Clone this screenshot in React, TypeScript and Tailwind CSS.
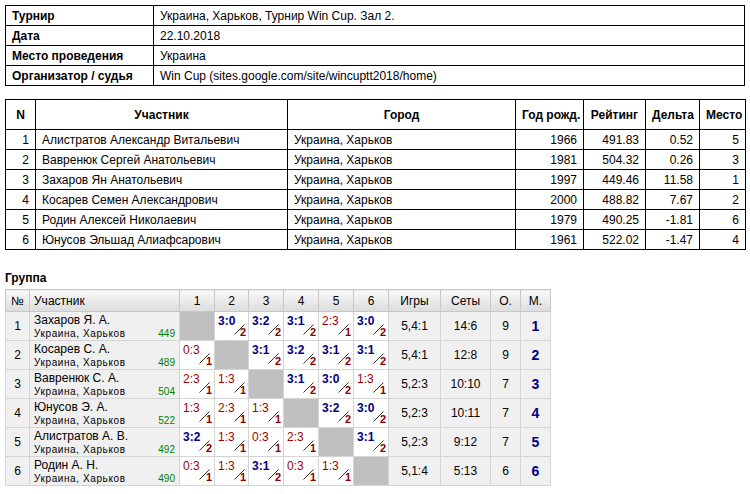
const info = [
  ["Турнир", "Украина, Харьков, Турнир Win Cup. Зал 2."],
  ["Дата", "22.10.2018"],
  ["Место проведения", "Украина"],
  ["Организатор / судья", "Win Cup (sites.google.com/site/wincuptt2018/home)"],
];
const players = [
  ["1", "Алистратов Александр Витальевич", "1966", "491.83", "0.52", "5"],
  ["2", "Вавренюк Сергей Анатольевич", "1981", "504.32", "0.26", "3"],
  ["3", "Захаров Ян Анатольевич", "1997", "449.46", "11.58", "1"],
  ["4", "Косарев Семен Александрович", "2000", "488.82", "7.67", "2"],
  ["5", "Родин Алексей Николаевич", "1979", "490.25", "-1.81", "6"],
  ["6", "Юнусов Эльшад Алиафсарович", "1961", "522.02", "-1.47", "4"],
];
const group = [
  ["Захаров Я. А.", "449", ["", "3:0", "3:2", "3:1", "2:3", "3:0"], "5,4:1", "14:6", "9", "1"],
  ["Косарев С. А.", "489", ["0:3", "", "3:1", "3:2", "3:1", "3:1"], "5,4:1", "12:8", "9", "2"],
  ["Вавренюк С. А.", "504", ["2:3", "1:3", "", "3:1", "3:0", "1:3"], "5,2:3", "10:10", "7", "3"],
  ["Юнусов Э. А.", "522", ["1:3", "2:3", "1:3", "", "3:2", "3:0"], "5,2:3", "10:11", "7", "4"],
  ["Алистратов А. В.", "492", ["3:2", "1:3", "0:3", "2:3", "", "3:1"], "5,2:3", "9:12", "7", "5"],
  ["Родин А. Н.", "490", ["0:3", "1:3", "3:1", "0:3", "1:3", ""], "5,1:4", "5:13", "6", "6"],
] as const;

function Score({ s }: { s: string }) {
  if (!s) return <td className="border border-[#d4d4d4] bg-[#c0c0c0] p-0" />;
  const win = s[0] === "3";
  return (
    <td className="border border-[#d4d4d4] bg-white p-0">
      <div className="relative h-[28px]">
        <span className={`absolute left-[3px] top-[3px] text-[12px] leading-none ${win ? "font-bold text-[#000080]" : "text-[#a00000]"}`}>{s}</span>
        <svg className="absolute left-[19px] top-[12px]" width="11" height="11"><line x1="0.5" y1="10.5" x2="10.5" y2="0.5" stroke="#333" strokeWidth="1" /></svg>
        <span className="absolute right-[2px] bottom-[2px] text-[11px] leading-none font-bold text-[#8b0000]">{win ? "2" : "1"}</span>
      </div>
    </td>
  );
}

export default function App() {
  const td = "border border-black px-[6px] h-[20px] whitespace-nowrap";
  const gh = "border border-[#c8c8c8] bg-gradient-to-b from-[#f8f8f8] to-[#dcdcdc] font-normal h-[22px] text-[12px]";
  const gc = "border border-[#d4d4d4] bg-[#f0f0f0] text-center";
  return (
    <div className="w-[750px] h-[494px] bg-white text-black text-[12px] px-[5px] pt-[5px]" style={{ fontFamily: "'Liberation Sans', Arial, sans-serif" }}>
      <table className="w-[740px] border-collapse">
        <tbody>
          {info.map(([a, b]) => (
            <tr key={a}>
              <td className={`${td} w-[148px] font-bold`}>{a}</td>
              <td className={td}>{b}</td>
            </tr>
          ))}
        </tbody>
      </table>
      <table className="w-[740px] border-collapse mt-[13px]" style={{ tableLayout: "fixed" }}>
        <colgroup>
          <col className="w-[30px]" /><col className="w-[252px]" /><col className="w-[228px]" /><col className="w-[68px]" /><col className="w-[62px]" /><col className="w-[54px]" /><col className="w-[46px]" />
        </colgroup>
        <thead>
          <tr className="h-[30px] font-bold">
            <td className={`${td} text-center`}>N</td>
            <td className={`${td} text-center`}>Участник</td>
            <td className={`${td} text-center`}>Город</td>
            <td className={`${td} text-center px-[2px]`}>Год рожд.</td>
            <td className={`${td} text-center`}>Рейтинг</td>
            <td className={`${td} text-center px-[2px]`}>Дельта</td>
            <td className={`${td} text-center px-[2px]`}>Место</td>
          </tr>
        </thead>
        <tbody>
          {players.map((p) => (
            <tr key={p[0]}>
              <td className={`${td} text-right`}>{p[0]}</td>
              <td className={td}>{p[1]}</td>
              <td className={td}>Украина, Харьков</td>
              <td className={`${td} text-right`}>{p[2]}</td>
              <td className={`${td} text-right`}>{p[3]}</td>
              <td className={`${td} text-right`}>{p[4]}</td>
              <td className={`${td} text-right`}>{p[5]}</td>
            </tr>
          ))}
        </tbody>
      </table>
      <div className="font-bold mt-[19px] mb-[2px] text-[12px]">Группа</div>
      <table className="w-[545px] border-collapse" style={{ tableLayout: "fixed" }}>
        <colgroup>
          <col className="w-[24px]" /><col className="w-[150px]" />
          <col className="w-[35px]" /><col className="w-[34px]" /><col className="w-[35px]" /><col className="w-[35px]" /><col className="w-[35px]" /><col className="w-[35px]" />
          <col className="w-[52px]" /><col className="w-[50px]" /><col className="w-[30px]" /><col className="w-[30px]" />
        </colgroup>
        <thead>
          <tr>
            <th className={gh}>№</th>
            <th className={`${gh} text-left px-[4px]`}>Участник</th>
            {[1, 2, 3, 4, 5, 6].map((n) => <th key={n} className={gh}>{n}</th>)}
            <th className={gh}>Игры</th><th className={gh}>Сеты</th><th className={gh}>О.</th><th className={gh}>М.</th>
          </tr>
        </thead>
        <tbody>
          {group.map((g, i) => (
            <tr key={i} className="h-[29px]">
              <td className={gc}>{i + 1}</td>
              <td className="border border-[#d4d4d4] bg-[#f0f0f0] px-[4px] leading-none">
                <div className="text-[12px]">{g[0]}</div>
                <div className="flex justify-between mt-[3px] text-[10px]">
                  <span className="tracking-[0.6px]">Украина, Харьков</span>
                  <span className="text-[#008000]">{g[1]}</span>
                </div>
              </td>
              {g[2].map((s, j) => <Score key={j} s={s} />)}
              <td className={gc}>{g[3]}</td>
              <td className={gc}>{g[4]}</td>
              <td className={gc}>{g[5]}</td>
              <td className={`${gc} font-bold text-[14px] text-[#000080]`}>{g[6]}</td>
            </tr>
          ))}
        </tbody>
      </table>
    </div>
  );
}
